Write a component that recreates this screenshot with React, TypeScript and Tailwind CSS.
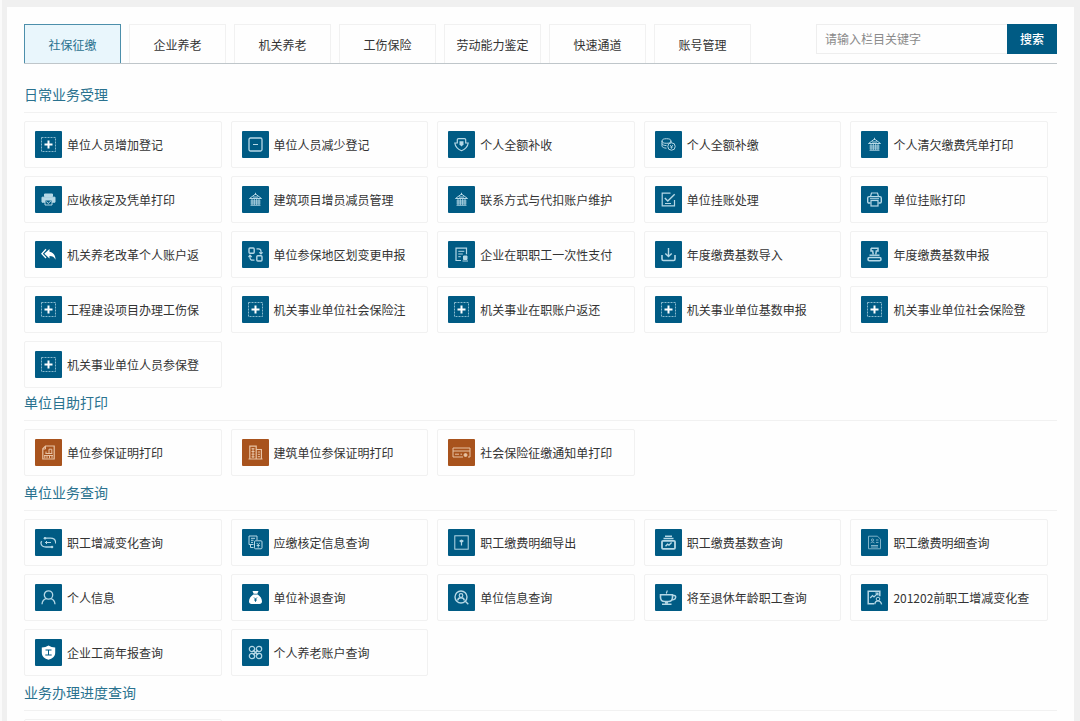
import type { ReactNode } from 'react'

type Item = { label: string; icon: string }
type Section = { title: string; tone: 'blue' | 'orange'; items: Item[] }

const tabs = ['社保征缴', '企业养老', '机关养老', '工伤保险', '劳动能力鉴定', '快速通道', '账号管理']

const sections: Section[] = [
  {
    title: '日常业务受理',
    tone: 'blue',
    items: [
      { label: '单位人员增加登记', icon: 'plus' },
      { label: '单位人员减少登记', icon: 'minus' },
      { label: '个人全额补收', icon: 'shield' },
      { label: '个人全额补缴', icon: 'coins' },
      { label: '个人清欠缴费凭单打印', icon: 'tower' },
      { label: '应收核定及凭单打印', icon: 'printerSolid' },
      { label: '建筑项目增员减员管理', icon: 'tower' },
      { label: '联系方式与代扣账户维护', icon: 'tower' },
      { label: '单位挂账处理', icon: 'check' },
      { label: '单位挂账打印', icon: 'printer' },
      { label: '机关养老改革个人账户返', icon: 'reply' },
      { label: '单位参保地区划变更申报', icon: 'swap' },
      { label: '企业在职职工一次性支付', icon: 'docPay' },
      { label: '年度缴费基数导入', icon: 'download' },
      { label: '年度缴费基数申报', icon: 'stamp' },
      { label: '工程建设项目办理工伤保', icon: 'plus' },
      { label: '机关事业单位社会保险注', icon: 'plus' },
      { label: '机关事业在职账户返还', icon: 'plus' },
      { label: '机关事业单位基数申报', icon: 'plus' },
      { label: '机关事业单位社会保险登', icon: 'plus' },
      { label: '机关事业单位人员参保登', icon: 'plus' },
    ],
  },
  {
    title: '单位自助打印',
    tone: 'orange',
    items: [
      { label: '单位参保证明打印', icon: 'certificate' },
      { label: '建筑单位参保证明打印', icon: 'building' },
      { label: '社会保险征缴通知单打印', icon: 'card' },
    ],
  },
  {
    title: '单位业务查询',
    tone: 'blue',
    items: [
      { label: '职工增减变化查询', icon: 'cycle' },
      { label: '应缴核定信息查询', icon: 'docs' },
      { label: '职工缴费明细导出', icon: 'export' },
      { label: '职工缴费基数查询', icon: 'archive' },
      { label: '职工缴费明细查询', icon: 'detail' },
      { label: '个人信息', icon: 'user' },
      { label: '单位补退查询', icon: 'moneyBag' },
      { label: '单位信息查询', icon: 'userSearch' },
      { label: '将至退休年龄职工查询', icon: 'cup' },
      { label: '201202前职工增减变化查', icon: 'chartUser' },
      { label: '企业工商年报查询', icon: 'badge' },
      { label: '个人养老账户查询', icon: 'clover' },
    ],
  },
]

const icons: Record<string, ReactNode> = {
  plus: (
    <>
      <rect x="0.5" y="0.5" width="14" height="14" strokeDasharray="2 1" opacity="0.75" />
      <path d="M7.5 3.5v8M3.5 7.5h8" stroke="#fff" strokeWidth="2" />
    </>
  ),
  minus: (
    <>
      <rect x="1" y="1" width="13" height="13" rx="1.5" strokeWidth="1.3" />
      <path d="M5 7.5h5" />
    </>
  ),
  shield: (
    <>
      <path d="M3.3 6V2.8C3.300 2 3.8 1.600 4.500 1.600h6c.7 0 1.200.4 1.200 1.200V6h2.500c-.5 3.700-3 6.200-6.700 7.700C3.800 12.200 1.300 9.700.8 6z" strokeWidth="1.2" />
      <path d="M5.500 4.200h4v3.300l-2 2-2-2z" fill="currentColor" stroke="none" />
    </>
  ),
  coins: (
    <>
      <ellipse cx="5.5" cy="4" rx="4.5" ry="2.3" />
      <path d="M1 4v5c0 1.2 2 2.1 4.5 2.2M1 6.5c0 1.2 2 2.1 4.5 2.1M10 4v2" />
      <circle cx="10.5" cy="9.5" r="3.7" />
      <path d="M9 8l1.5 1.5L12 8M10.5 9.5v2.3M9 10h3" strokeWidth="0.8" />
    </>
  ),
  tower: (
    <>
      <path d="M1.5 6.5L7.5 2l6 4.500zM7.500.8V3M5 5h5" />
      <path d="M4 7v6M6.300 7v6M8.700 7v6M11 7v6" strokeWidth="0.9" />
      <path d="M2.500 9h10M2.500 11h10M2.500 13.200h10" />
    </>
  ),
  printerSolid: (
    <>
      <path d="M3.5 2h8v2.5h-8z" fill="currentColor" />
      <path d="M1 5.2h13v5H1z" fill="currentColor" />
      <path d="M4 8h7v5H4z" fill="#005b84" />
      <path d="M5.5 9.5l1.7 2L10 8.8" />
    </>
  ),
  check: (
    <>
      <path d="M13.5 8v5.8H1.2V1.2h8.3" strokeWidth="1.2" />
      <path d="M3.8 6l3 3L13.7 2.2" strokeWidth="1.4" />
      <path d="M4 11.5h6" />
    </>
  ),
  printer: (
    <>
      <path d="M3.5 4.5l1-3.5h6l1 3.5" strokeWidth="1.2" />
      <path d="M3.5 11H2c-.8 0-1.3-.5-1.3-1.3V6c0-.8.6-1.4 1.4-1.4h10.8c.8 0 1.4.6 1.4 1.4v3.7c0 .8-.5 1.3-1.3 1.3h-1.5" strokeWidth="1.4" />
      <rect x="4" y="8.5" width="7" height="5.5" strokeWidth="1.2" />
      <path d="M3 6.7h9" />
    </>
  ),
  reply: (
    <>
      <path d="M8.5 2v2.7c4 .6 6 3.8 6 8-1.3-2.8-3-3.8-6-3.8v2.6L3.3 6.7z" fill="#fff" stroke="none" />
      <path d="M5 2.3L.9 6.7 5 11" stroke="#fff" strokeWidth="1.3" />
    </>
  ),
  swap: (
    <>
      <rect x="1" y="1" width="5.2" height="5.2" rx="1" strokeWidth="1.4" />
      <rect x="8.8" y="8.8" width="5.2" height="5.2" rx="1" strokeWidth="1.4" />
      <path d="M8.5 1.8h2c1.5 0 2.5 1 2.5 2.5v2.5M11.3 5.3L13 7l1.6-1.7M6.5 13.2h-2C3 13.2 2 12.2 2 10.7V8.5M.5 10L2 8.2 3.7 10" strokeWidth="1.2" />
    </>
  ),
  docPay: (
    <>
      <path d="M7 13.5H2V1.2h10.5v6" strokeWidth="1.2" />
      <path d="M4.3 4.3h6M4.3 7h4.5M4.3 9.7h2.5" />
      <path d="M9.500 9h3.500v3.500H9.500z" fill="currentColor" />
      <path d="M8.500 14h5.500" />
    </>
  ),
  download: (
    <>
      <path d="M7.5 1v8.3M4.3 6.4l3.2 3.2 3.2-3.2" strokeWidth="1.4" />
      <path d="M1 8v4c0 .9.5 1.5 1.4 1.5h10.2c.9 0 1.4-.6 1.4-1.5V8" strokeWidth="1.6" />
    </>
  ),
  stamp: (
    <>
      <path d="M4 1.300h7v2.700H9.300L8.800 7.500M6.200 7.500L5.700 4H4V1.300" strokeWidth="1.5" />
      <path d="M2.500 8.200h10" strokeWidth="1.4" />
      <rect x="1" y="10.5" width="13" height="3.2" rx="1.5" strokeWidth="1.6" />
    </>
  ),
  certificate: (
    <>
      <path d="M4.5 1h8.7v13H1.8V3.8z" strokeWidth="1.2" />
      <path d="M4.5 1v3H2" />
      <path d="M8 8.5V4.2h2.8v4.3zM5 6.5v2M4.5 8.5h6.8" />
      <path d="M3 10.5h9M3.8 11v2.3M6 11v2.3M8.5 11v2.3M11 11v2.3" />
    </>
  ),
  building: (
    <>
      <path d="M1.8 14V1.2h6.4V14M8.2 4.5h5.2V14M.5 14h14" strokeWidth="1.2" />
      <path d="M3.5 3.8h3M3.5 6.5h3M3.5 9.2h3M3.5 11.8h3M9.8 7h2.2M9.8 9.3h2.2M9.8 11.7h2.2M5 3v10" />
    </>
  ),
  card: (
    <>
      <path d="M9 12H-1V3h17v9h-2" />
      <path d="M-1 6h17M1 9.200h4M6.500 9.200h1.500" />
      <circle cx="11.500" cy="10" r="1.500" fill="currentColor" />
    </>
  ),
  cycle: (
    <>
      <path d="M3.200 3.200h6.300c2.500 0 4.700 1.400 5 3.500M11.800 12H5C2.300 12 .3 10.300 0 8.500c-.2-1 .2-1.700.8-2.300" strokeWidth="1.3" />
      <circle cx="4" cy="3.200" r="1.300" fill="currentColor" stroke="none" />
      <circle cx="11" cy="12" r="1.300" fill="currentColor" stroke="none" />
      <path d="M4 7.500h6M5.500 6v3M14.500 8.500V6" />
    </>
  ),
  docs: (
    <>
      <path d="M5.500 9.500H1V1h8v4" />
      <path d="M3 3.300h4M3 5.300h2.500M3 7.400h2M2.500 10v2.500h3" />
      <rect x="6.500" y="5.800" width="7.500" height="8" rx="1" />
      <path d="M8.700 8l1.500 1.600L11.800 8M10.200 9.600v3M8.700 10.500h3" />
    </>
  ),
  export: (
    <>
      <rect x="0.8" y="0.8" width="13.4" height="13.4" />
      <path d="M5.5 5.400l2-1 2 1v1L8.100 7.600v3H6.900v-3L5.500 6.400z" fill="currentColor" stroke="none" />
    </>
  ),
  archive: (
    <>
      <path d="M4 1.200h7M2.500 3.400h10" strokeWidth="1.5" />
      <rect x="1" y="5.8" width="13" height="8" rx="1" strokeWidth="1.8" />
      <path d="M4.500 11.200l2-2 1.500 1 2.600-2.600" strokeWidth="1.4" />
    </>
  ),
  detail: (
    <g opacity="0.7">
      <path d="M1.500 1.200h9l3 3v9.600h-12z" />
      <circle cx="5.500" cy="5" r="1.100" />
      <path d="M3.700 8.200c.3-1.600 3.300-1.600 3.600 0M9 5h2.500M9 7.400h2.500M4 10.500h7M4 12h7" />
    </g>
  ),
  user: (
    <>
      <circle cx="7.5" cy="5" r="4.2" strokeWidth="1.3" />
      <path d="M1 14.300c.3-3.200 2-5.100 4.300-5.600M14 14.300c-.3-3.200-2-5.100-4.300-5.600" strokeWidth="1.3" />
    </>
  ),
  moneyBag: (
    <>
      <path d="M4.500 1h6L9.300 3.700H5.700zM5.300 4.600h4.400c2.600 1.600 4.300 4.300 4.300 7 0 1.600-1 2.400-2.500 2.400h-8C2 14 1 13.200 1 11.600c0-2.700 1.700-5.400 4.300-7z" fill="#fff" stroke="none" />
      <path d="M6 7.500L7.500 9 9 7.500M7.500 9v2.800M6 10h3" stroke="#005b84" strokeWidth="0.9" />
    </>
  ),
  userSearch: (
    <>
      <circle cx="7" cy="7" r="6" strokeWidth="1.4" />
      <circle cx="7" cy="5.500" r="1.800" strokeWidth="1.2" />
      <path d="M3.700 10.500c.4-3.600 6.200-3.600 6.600 0M11.300 11.300l3 3" strokeWidth="1.4" />
    </>
  ),
  cup: (
    <>
      <path d="M-.5 4.800h12v2.400c0 2.700-1.900 4.300-4.200 4.300H3.700C1.400 11.500-.5 9.900-.5 7.200z" strokeWidth="1.6" />
      <path d="M11.500 5.500h1.700c2 0 2 3.500-.3 3.900l-2 .3M1 14.200h9.500" strokeWidth="1.5" />
      <path d="M4 12.800h3" strokeWidth="2" />
      <path d="M5.700 3.500c-1-1.200 1-1.500.3-3" strokeWidth="1.2" />
    </>
  ),
  chartUser: (
    <>
      <path d="M7 13.800H1.200V1.200h11.600v5" strokeWidth="1.500" />
      <path d="M3.200 8l2.300-2.500L7 7l4-4M8.300 3H11v2.500" strokeWidth="1.200" />
      <circle cx="11" cy="9" r="1.800" />
      <path d="M7.800 14.300c.3-3.500 1.800-3.500 3.200-3.500s2.900.5 3.600 3.500" strokeWidth="1.300" />
    </>
  ),
  badge: (
    <>
      <path d="M.8 2.500C3.500 2.500 5.500 1.500 7.500.5c2 1 4 2 6.700 2v5c0 4-2.700 6.200-6.700 7.200-4-1-6.700-3.200-6.700-7.200z" fill="#fff" stroke="none" />
      <path d="M4.500 5h6M7.500 5v5M4.300 10h6.400" stroke="#005b84" />
    </>
  ),
  clover: (
    <>
      <circle cx="4" cy="4" r="2.700" strokeWidth="1.200" />
      <circle cx="11" cy="4" r="2.700" strokeWidth="1.200" />
      <circle cx="4" cy="11" r="2.700" strokeWidth="1.200" />
      <circle cx="11" cy="11" r="2.700" strokeWidth="1.200" />
      <path d="M5 5l5 5M10 5l-5 5" strokeWidth="1.500" />
    </>
  ),
}

function Tile({ item, tone }: { item: Item; tone: Section['tone'] }) {
  const toneClass = tone === 'blue' ? 'bg-[#005b84] text-[#b5d8e6]' : 'bg-[#a8531d] text-[#e8c3a4]'
  return (
    <a href="#" className="flex items-center gap-[5px] h-[47px] px-2.5 border border-[#f1f1f1] rounded-xs text-xs text-[#333] hover:border-[#005b84]">
      <span className={`flex items-center justify-center size-[27px] shrink-0 rounded-[1px] ${toneClass}`}>
        <svg viewBox="0 0 15 15" width="15" height="15" fill="none" stroke="currentColor" className="overflow-visible" aria-hidden="true">
          {icons[item.icon]}
        </svg>
      </span>
      <span className="whitespace-nowrap">{item.label}</span>
    </a>
  )
}

function SectionTitle({ children }: { children: ReactNode }) {
  return (
    <h2 className="h-8 pt-[3px] mb-2 border-b border-[#f1f1f1] text-sm leading-5 text-[#2a728f]">{children}</h2>
  )
}

export default function App() {
  return (
    <div className="h-screen overflow-hidden pt-[7px] pl-[5px] pr-1.5 bg-[#f0f0f0] border-l-2 border-[#fafafa] font-['Noto_Sans_CJK_SC',sans-serif]">
      <main className="min-h-full px-[17px] pt-[17px] bg-[#fefefe]">

        {/* Tabs and search */}
        <div className="flex justify-between items-start h-10 border-b border-[#bfc6ca]">
          <nav className="flex gap-2">
            {tabs.map((tab, i) => (
              <button
                key={tab}
                type="button"
                className={
                  i === 0
                    ? 'w-[97px] h-[39px] pt-0.5 border border-b-0 border-[#4c8fab] bg-[#e9f6fc] text-xs text-[#2a728f]'
                    : 'w-[97px] h-[39px] pt-0.5 border border-b-0 border-[#f1f1f1] text-xs text-[#333]'
                }
              >
                {tab}
              </button>
            ))}
          </nav>
          <form className="flex h-[30px]" onSubmit={(e) => e.preventDefault()}>
            <input
              type="text"
              aria-label="请输入栏目关键字"
              placeholder="请输入栏目关键字"
              className="w-[191px] px-2 border border-r-0 border-[#eee] text-xs text-[#333] placeholder:text-[#8a8a8a] outline-none"
            />
            <button type="submit" className="w-[50px] bg-[#005b84] text-xs font-medium text-white">搜索</button>
          </form>
        </div>

        {/* Business groups */}
        <div className="pt-[17px]">
          {sections.map((section, i) => (
            <section key={section.title} className={i === 0 ? 'pb-px' : 'pb-[3px]'}>
              <SectionTitle>{section.title}</SectionTitle>
              <div className="grid grid-cols-5 gap-x-[9px] gap-y-2 pr-[9px]">
                {section.items.map((item) => (
                  <Tile key={item.label} item={item} tone={section.tone} />
                ))}
              </div>
            </section>
          ))}
          <section>
            <SectionTitle>业务办理进度查询</SectionTitle>
            <div className="grid grid-cols-5 gap-x-[9px] pr-[9px]">
              <div className="h-[47px] border border-[#f1f1f1] rounded-xs" />
            </div>
          </section>
        </div>
      </main>
    </div>
  )
}
